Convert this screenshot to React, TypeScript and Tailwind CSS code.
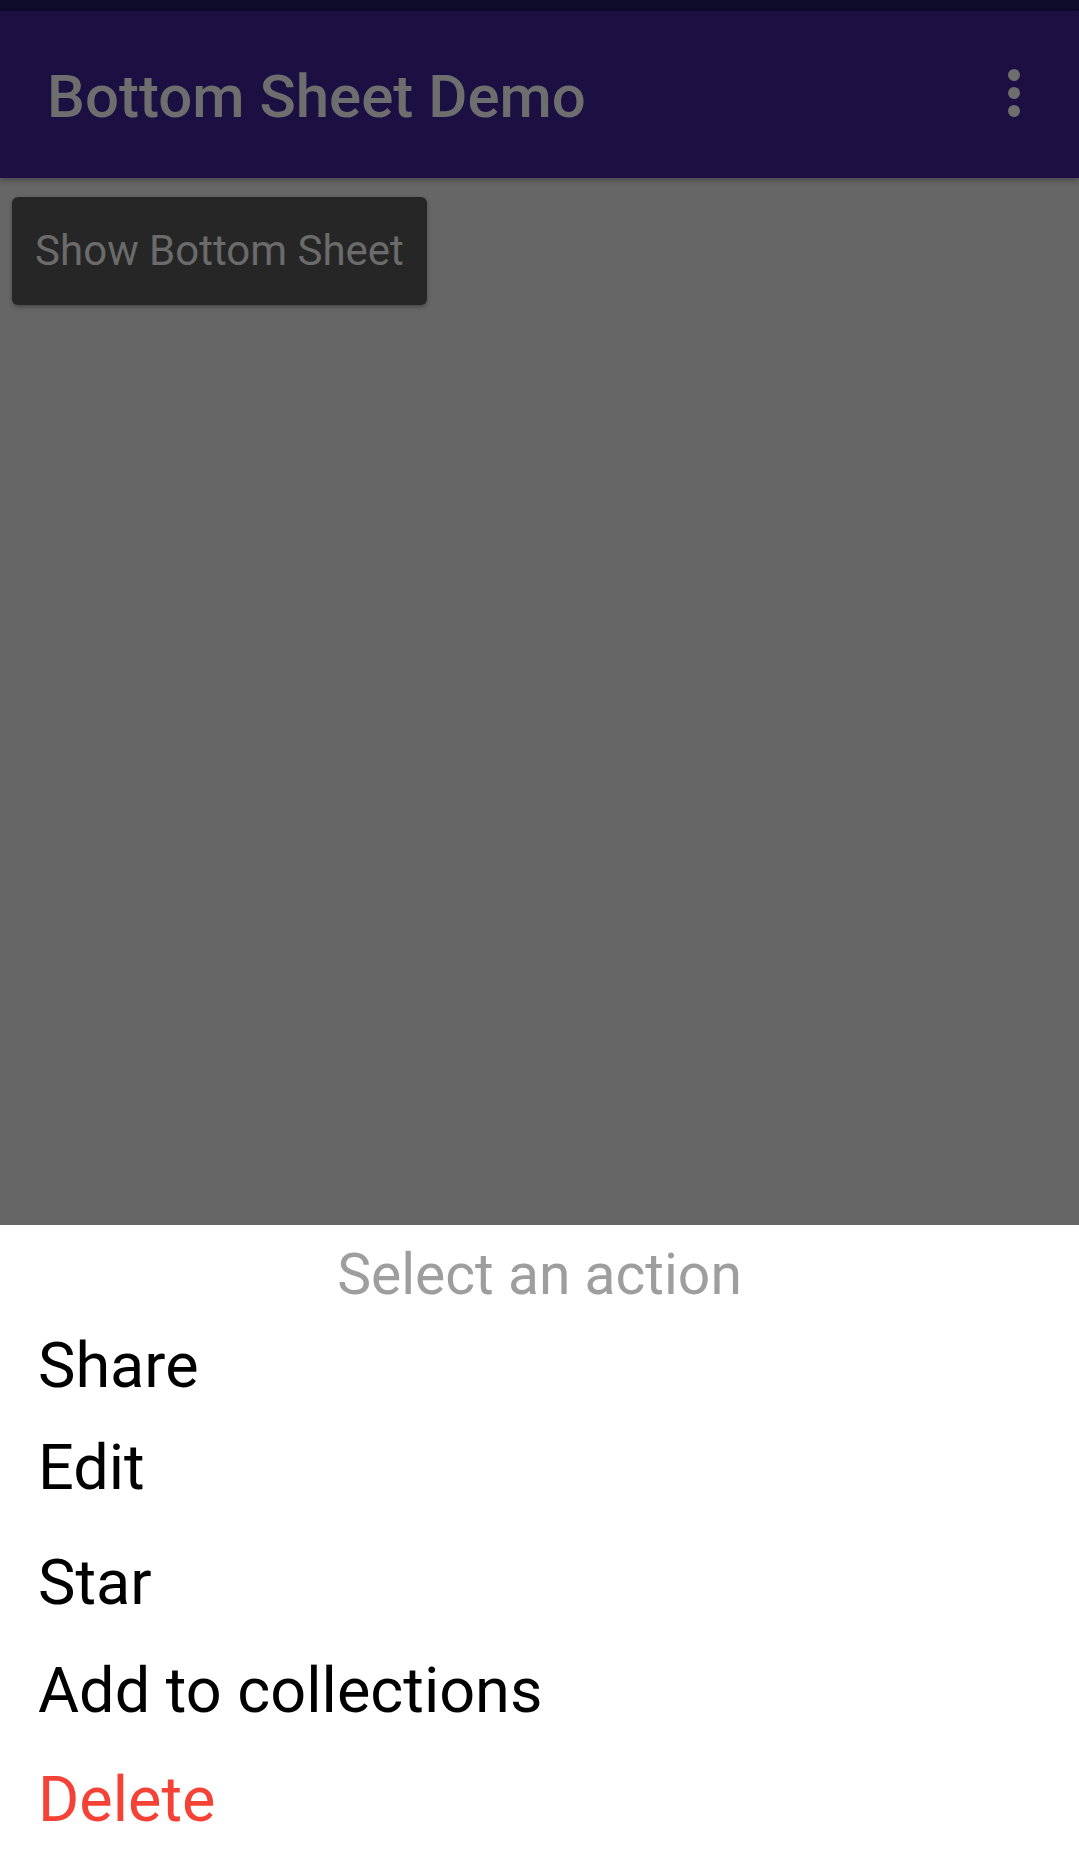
import React from "react";

const actions = [
  { label: "Share", className: "mt-[23px] text-black" },
  { label: "Edit", className: "mt-[30px] text-black" },
  { label: "Star", className: "mt-[43px] text-black" },
  { label: "Add to collections", className: "mt-[36px] text-black" },
  { label: "Delete", className: "mt-[37px] text-[#f44336]" },
];

export default function App() {
  return (
    <div
      className="flex h-[1858px] w-full flex-col overflow-hidden bg-[#666666]"
      style={{ fontFamily: "Roboto, 'Noto Sans', sans-serif" }}
    >
      {/* Status bar (dimmed) */}
      <div className="h-[11px] shrink-0 bg-[#0e0a29]" />

      {/* App bar */}
      <div className="relative z-10 flex h-[167px] shrink-0 items-center justify-between bg-[#1c1043] pl-[47px] pr-[59px] pt-[5px] shadow-[0_3px_5px_rgba(0,0,0,0.25)]">
        <h1 className="text-[60px] font-medium leading-[70px] text-[#6e6e6e]">
          Bottom Sheet Demo
        </h1>
        <div className="-mt-[8px] flex flex-col items-center gap-[6px]">
          <span className="h-[12px] w-[12px] rounded-full bg-[#6e6e6e]" />
          <span className="h-[12px] w-[12px] rounded-full bg-[#6e6e6e]" />
          <span className="h-[12px] w-[12px] rounded-full bg-[#6e6e6e]" />
        </div>
      </div>

      {/* Content behind scrim */}
      <div className="flex-1 pl-[12px] pt-[19px]">
        <button className="flex h-[108px] w-[415px] items-center justify-center rounded-[6px] bg-[#262626] text-[42px] leading-[50px] text-[#6b6b6b] shadow-[0_2px_4px_rgba(0,0,0,0.3)]">
          Show Bottom Sheet
        </button>
      </div>

      {/* Bottom sheet */}
      <div className="flex h-[633px] shrink-0 flex-col bg-white pt-[18px]">
        <p className="text-center text-[57px] leading-[64px] text-[#9e9e9e]">
          Select an action
        </p>
        <ul className="flex flex-col pl-[38px]">
          {actions.map((a) => (
            <li key={a.label} className={`text-[63px] leading-[72px] ${a.className}`}>
              {a.label}
            </li>
          ))}
        </ul>
      </div>
    </div>
  );
}
